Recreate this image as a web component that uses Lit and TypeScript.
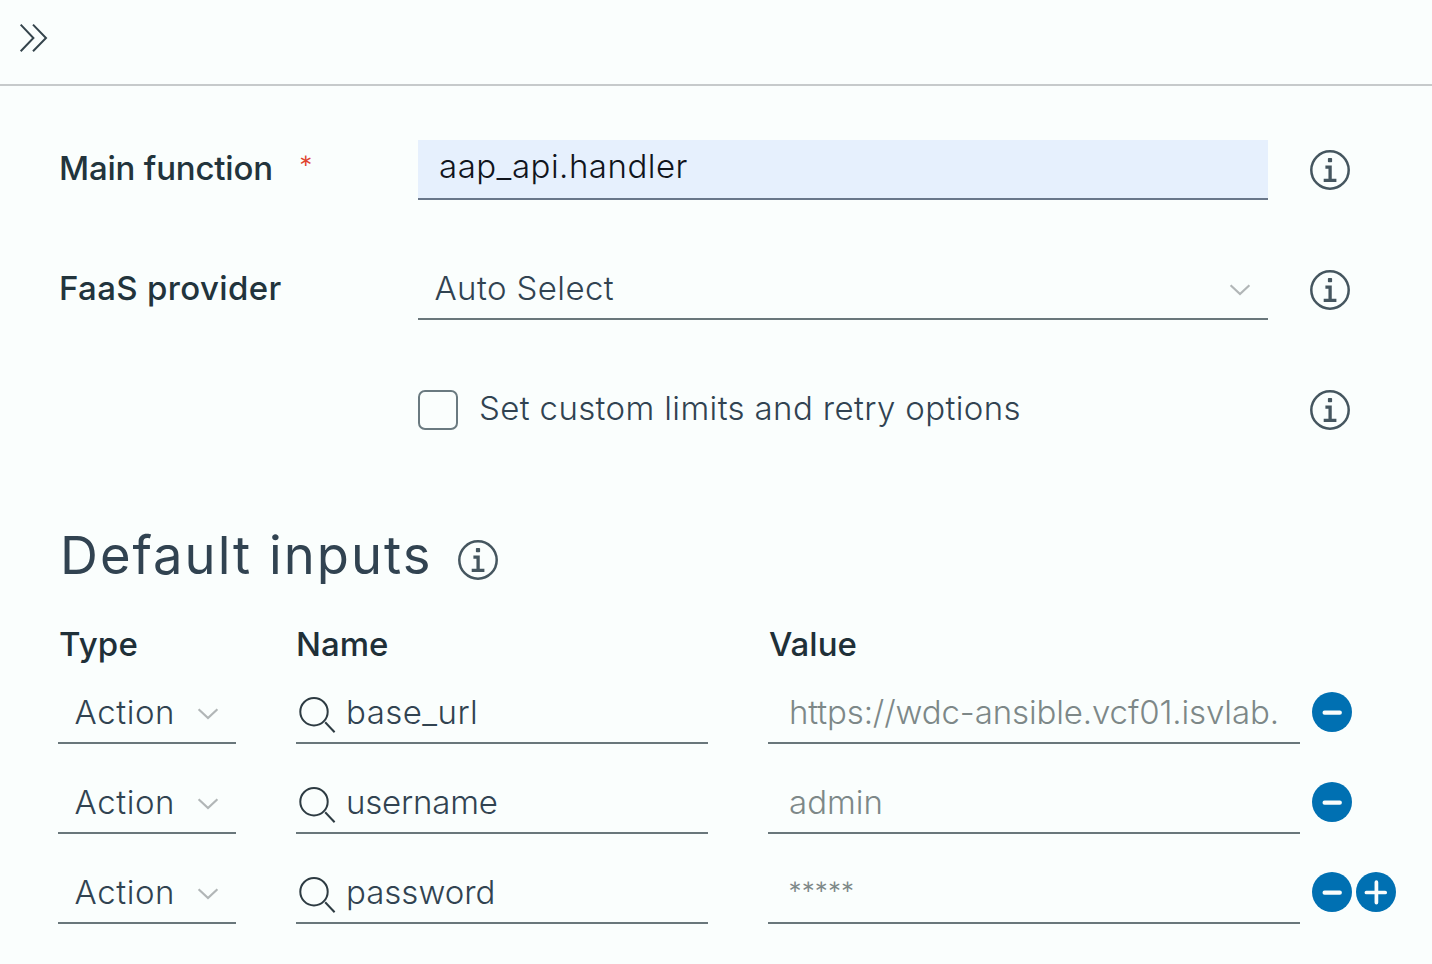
import { LitElement, html, css, svg, nothing } from "lit";
import { customElement, property } from "lit/decorators.js";

const infoIcon = html`<svg class="info" width="40" height="40" viewBox="0 0 40 40" aria-hidden="true">
  <circle cx="20" cy="20" r="18.7" fill="none" stroke="#45565f" stroke-width="2.5" />
  <rect x="17.9" y="8" width="4.2" height="4.2" rx="0.8" fill="#45565f" />
  <path d="M15.4 17.2H20.1V30.2M13.7 30.3H26.4" fill="none" stroke="#45565f" stroke-width="3.3" />
</svg>`;

const chevronIcon = html`<svg class="chevron" width="22" height="14" viewBox="0 0 22 14" aria-hidden="true">
  <path d="M1.6 2.2L11 11L20.4 2.2" fill="none" stroke="#b1b6b7" stroke-width="2.2" />
</svg>`;

const searchIcon = html`<svg class="search" width="40" height="40" viewBox="0 0 40 40" aria-hidden="true">
  <circle cx="18" cy="17.7" r="13.7" fill="none" stroke="#2d3b42" stroke-width="2" />
  <path d="M29.2 28.2L38.6 38.2" fill="none" stroke="#2d3b42" stroke-width="2" />
</svg>`;

@customElement("round-button")
class RoundButton extends LitElement {
  @property() kind = "minus";

  static styles = css`
    :host { display: block; width: 40px; height: 40px; }
    svg { display: block; }
  `;

  render() {
    return html`<svg width="40" height="40" viewBox="0 0 40 40">
      <circle cx="20" cy="20" r="20" fill="#0070b2" />
      ${this.kind === "plus"
        ? svg`<path d="M10.4 20.5H29.2M20.4 10.2V30.6" stroke="#fafdfc" stroke-width="3.7" stroke-linecap="round" />`
        : svg`<path d="M12.6 20.7H27.8" stroke="#fafdfc" stroke-width="4.2" stroke-linecap="round" />`}
    </svg>`;
  }
}

@customElement("app-root")
class AppRoot extends LitElement {
  inputs = [
    { name: "base_url", value: "https://wdc-ansible.vcf01.isvlab.", key: "url" },
    { name: "username", value: "admin", key: "user" },
    { name: "password", value: "*****", key: "pass" },
  ];

  static styles = css`
    :host {
      display: block;
      height: 964px;
      box-sizing: border-box;
      overflow: hidden;
      background: #fafefd;
      color: #314351;
      font: 330 33px/56px Inter, "Liberation Sans", sans-serif;
      font-variant-ligatures: none;
      white-space: nowrap;
    }
    svg { display: block; flex: none; }
    header {
      height: 86px;
      border-bottom: 2px solid #c6cacb;
      padding: 22px 0 0 18px;
      box-sizing: border-box;
    }
    .form { display: grid; gap: 60px; padding: 54px 0 0 60px; }
    .row { display: grid; grid-template-columns: 358px 850px 40px; height: 60px; }
    .row .info { margin: 10px 0 0 42px; }
    .label { display: flex; font-weight: 500; color: #22343c; margin-left: -1px; }
    .star { color: #e0432f; font-family: Lato, sans-serif; font-weight: 400; margin-left: 26px; line-height: 54px; }
    .field { border-bottom: 2px solid #69777b; display: flex; box-sizing: border-box; height: 60px; }
    .filled { background: #e6f0fd; color: #10141c; padding-left: 21px; line-height: 53px; border-color: #69778a; }
    .select { padding-left: 16.5px; justify-content: space-between; }
    .select .chevron { margin: 23px 17px 0 0; }
    .check { display: flex; }
    .box { width: 40px; height: 40px; box-sizing: border-box; border: 2px solid #6a7a80; border-radius: 7px; margin: 10px 21px 0 0; }
    .heading { display: flex; justify-content: space-between; width: 438px; padding: 80px 0 0 60px; font-size: 52.5px; font-weight: 400; line-height: 70px; height: 67px; }
    .heading .info { margin: 20px 0 0 0; }
    .table { padding: 39px 0 0 58px; }
    .cols { display: grid; grid-template-columns: 178px 412px 532px 84px; column-gap: 60px; }
    .head { font-weight: 500; color: #1f3038; line-height: 36px; height: 58px; }
    .body { display: grid; row-gap: 30px; }
    .name { gap: 10px; }
    .name .search { margin: 10px 0 0 0; }
    .value { color: #7d8888; padding-left: 21px; overflow: hidden; }
    .buttons { display: flex; gap: 4px; margin: 8px 0 0 -48px; }

    .t-main { letter-spacing: -0.2px; }
    .t-handler { letter-spacing: 0.5px; }
    .t-faas { letter-spacing: 0.35px; }
    .t-auto { letter-spacing: 0.4px; }
    .t-limits { letter-spacing: 0.37px; }
    .t-heading { letter-spacing: 2px; }
    .t-type { padding-left: 1px; letter-spacing: 0.2px; }
    .t-value { padding-left: 1px; }
    .t-action { letter-spacing: 0.6px; }
    .n-url { letter-spacing: 0.45px; }
    .n-user { letter-spacing: -0.2px; }
    .v-url { letter-spacing: -0.12px; }
    .v-pass { font-family: Lato, sans-serif; font-weight: 400; letter-spacing: -0.9px; margin-left: -1px; line-height: 59px; }
  `;

  render() {
    return html`
      <header>
        <svg width="32" height="32" viewBox="0 0 32 32" aria-hidden="true">
          <path d="M2.7 2.6L15.4 16L2.7 29.2M15 2.6L28 16L15 29.2" fill="none" stroke="#34444c" stroke-width="2" />
        </svg>
      </header>
      <section class="form">
        <div class="row">
          <div class="label"><span class="t-main">Main function</span><span class="star">*</span></div>
          <div class="field filled"><span class="t-handler">aap_api.handler</span></div>
          ${infoIcon}
        </div>
        <div class="row">
          <div class="label"><span class="t-faas">FaaS provider</span></div>
          <div class="field select"><span class="t-auto">Auto Select</span>${chevronIcon}</div>
          ${infoIcon}
        </div>
        <div class="row">
          <div></div>
          <div class="check"><span class="box"></span><span class="t-limits">Set custom limits and retry options</span></div>
          ${infoIcon}
        </div>
      </section>
      <div class="heading"><span class="t-heading">Default inputs</span>${infoIcon}</div>
      <section class="table">
        <div class="cols head"><span class="t-type">Type</span><span class="t-name">Name</span><span class="t-value">Value</span></div>
        <div class="body">
          ${this.inputs.map(
            (item, i) => html`<div class="cols">
              <div class="field select"><span class="t-action">Action</span>${chevronIcon}</div>
              <div class="field name">${searchIcon}<span class="n-${item.key}">${item.name}</span></div>
              <div class="field value"><span class="v-${item.key}">${item.value}</span></div>
              <div class="buttons">
                <round-button kind="minus"></round-button>
                ${i === this.inputs.length - 1 ? html`<round-button kind="plus"></round-button>` : nothing}
              </div>
            </div>`
          )}
        </div>
      </section>
    `;
  }
}
